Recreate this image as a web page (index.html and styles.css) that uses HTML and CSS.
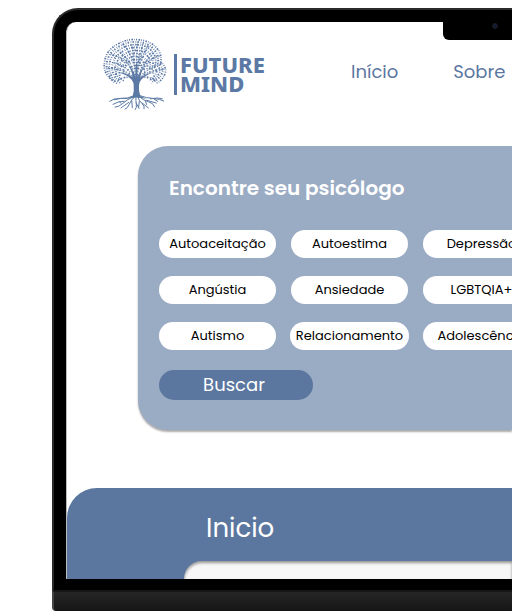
FILE: index.html
```html
<!DOCTYPE html>
<html lang="pt-BR">
<head>
<meta charset="utf-8">
<meta name="viewport" content="width=device-width, initial-scale=1">
<title>Future Mind</title>
<link rel="stylesheet" href="styles.css">
</head>
<body>
<div class="laptop">
  <div class="lid">
    <div class="notch"><span class="camera"></span></div>
    <div class="screen">
      <header class="header">
        <a class="logo" href="#">
          <svg class="tree" viewBox="20 22 198 218" aria-hidden="true">
            <defs>
              <path id="branches" d="M118 150Q112 130 76 118Q52 110 34 112M122 150Q118 118 90 92Q70 76 46 70M122 140Q120 100 104 70Q96 52 82 40M124 140Q124 90 126 32M125 140Q128 100 146 68Q152 54 160 44M126 145Q136 112 164 90Q178 78 192 76M127 148Q144 128 176 120Q194 116 208 116M114 142Q92 134 66 148M130 142Q154 134 184 148M104 124Q84 100 56 96M112 116Q106 92 72 62M136 118Q144 98 178 62M142 130Q160 112 198 98M121 112Q114 88 112 40M127 112Q132 84 142 40"/>
            </defs>
            <use class="twigs" href="#branches"/>
            <use class="buds" href="#branches"/>
            <g class="leaves">
              <path d="M50 148Q24 128 27 98Q30 60 65 41Q96 22 132 27Q174 31 192 63Q199 78 196 93Q214 108 210 127Q201 150 181 158"/>
              <path d="M57 154Q32 130 34 100Q37 66 70 48Q98 30 130 34Q168 38 184 67Q190 80 188 97Q205 110 202 124Q193 143 177 151"/>
              <path d="M65 158Q39 130 42 104Q44 73 75 55Q101 39 129 42Q161 44 177 72Q183 84 180 101Q197 112 193 124Q184 141 168 157"/>
              <path d="M74 156Q48 132 50 107Q53 80 80 63Q103 47 128 50Q155 53 169 77Q175 91 172 105Q187 115 183 126Q176 139 160 151"/>
              <path d="M85 150Q56 132 59 111Q61 88 86 71Q106 56 128 59Q149 61 161 83Q166 96 164 108Q176 118 172 129"/>
              <path d="M62 139Q60 114 76 95Q94 71 113 67Q136 66 153 89Q159 104 154 116"/>
              <path d="M74 135Q67 118 83 101Q97 80 116 76Q134 76 145 96Q150 108 145 119"/>
              <path d="M84 125Q82 113 94 102Q106 86 121 86Q136 93 139 110"/>
            </g>
            <path class="trunk" d="M112 196Q117 180 115 162Q114 147 98 136Q84 128 66 124Q88 125 101 132L111 139Q112 124 98 102Q115 118 120 139L122 98L126 98L126 139Q132 123 148 106Q136 124 134 142Q148 128 176 124Q150 133 139 145Q131 152 131 164Q130 184 136 196L154 204L123 200L93 204Z"/>
            <g class="roots">
              <path d="M117 194Q98 204 76 203T42 212M115 197Q94 207 82 218T58 229M119 197Q107 207 102 220T88 235M122 197Q121 210 123 220T119 237M127 197Q131 210 140 218T146 235M130 196Q146 210 160 213T178 229M132 194Q154 202 174 203T206 211M96 203Q72 200 56 207M88 211Q68 211 52 221M101 214L76 232M109 208L111 232M132 210L130 230M140 216L160 232M153 208L184 217M164 204Q188 199 202 204M122 216L132 234M77 218L72 212M150 209L154 222M175 204L188 212"/>
            </g>
          </svg>
          <span class="wordmark">FUTURE<br>MIND</span>
        </a>
        <nav class="nav">
          <a href="#inicio">Início</a>
          <a href="#sobre">Sobre</a>
        </nav>
      </header>

      <main>
        <section class="finder">
          <h1>Encontre seu psicólogo</h1>
          <div class="topics">
            <button type="button">Autoaceitação</button>
            <button type="button">Autoestima</button>
            <button type="button">Depressão</button>
            <button type="button">Angústia</button>
            <button type="button">Ansiedade</button>
            <button type="button">LGBTQIA+</button>
            <button type="button">Autismo</button>
            <button type="button">Relacionamento</button>
            <button type="button">Adolescência</button>
          </div>
          <button class="search" type="button">Buscar</button>
        </section>

        <section class="intro" id="inicio">
          <h2>Inicio</h2>
          <div class="panel"></div>
        </section>
      </main>
    </div>
  </div>
  <div class="base"></div>
</div>
</body>
</html>
```
FILE: styles.css
```css
* {
  box-sizing: border-box;
}

body {
  margin: 0;
  background: #fff;
  color: #000;
  font-family: Poppins, Inter, sans-serif;
  overflow: hidden;
}

h1,
h2 {
  margin: 0;
}

a {
  color: #5b779f;
  text-decoration: none;
}

button {
  border: 0;
  padding: 0;
  font: inherit;
  color: inherit;
}

.laptop {
  display: flex;
  flex-direction: column;
  min-height: 100vh;
  padding: 8px 0 0 52px;
}

.lid {
  position: relative;
  padding: 12px 0 11px 12px;
  border: 2px solid #2a2a2a;
  border-width: 2px 0 0 2px;
  border-radius: 26px 0 0 0;
  background: #000;
}

.notch {
  position: absolute;
  top: 0;
  right: 0;
  width: 69px;
  height: 30px;
  border-radius: 0 0 0 6px;
  background: #000;
}

.camera {
  position: absolute;
  top: 13px;
  left: 49px;
  width: 6px;
  height: 6px;
  border: 1px solid #1c1c1c;
  border-radius: 50%;
  background: #111b33;
}

.screen {
  overflow: hidden;
  border-left: 1px solid #bbb;
  border-radius: 10px 0 0 0;
  background: #fff;
}

.header {
  display: flex;
  align-items: center;
  height: 100px;
  padding-left: 35px;
}

.logo {
  display: flex;
  align-items: center;
  gap: 6px;
  width: 249px;
  padding-top: 4px;
}

.tree {
  flex: none;
  width: 66px;
  height: 73px;
  fill: none;
  stroke: #5b79a4;
}

.twigs {
  stroke-width: 1;
}

.buds {
  stroke-width: 6;
  stroke-dasharray: 2 5 4 7;
}

.leaves {
  stroke-width: 5;
  stroke-dasharray: 3 4 5 3 2 4;
}

.leaves path:nth-child(even) {
  stroke-width: 6;
  stroke-dasharray: 2 4 4 5;
}

.trunk {
  fill: #5b79a4;
  stroke: none;
}

.roots {
  stroke-width: 3;
}

.wordmark {
  padding: 1px 0 2px 3px;
  border-left: 3px solid #5b79a4;
  color: #5b79a4;
  font-family: "Noto Sans", sans-serif;
  font-size: 22px;
  font-weight: 800;
  line-height: 19px;
}

.nav {
  display: flex;
  gap: 55px;
  padding-bottom: 2px;
  font-size: 18px;
}

.finder {
  margin: 24px 0 0 71px;
  padding: 28px 0 30px 21px;
  border-radius: 30px 0 0 30px;
  background: #9aabc4;
  box-shadow: 0 2px 2px #0005;
}

.finder h1 {
  padding-left: 10px;
  color: #fff;
  font-size: 20px;
  font-weight: 600;
  line-height: 28px;
}

.topics {
  display: grid;
  grid-template-columns: 117px 121px 117px;
  gap: 18px 13px;
  justify-items: center;
  margin-top: 28px;
  font-size: 13px;
}

.topics button {
  min-width: 117px;
  height: 28px;
  padding: 0 6px 1px;
  border-radius: 14px;
  background: #fff;
}

.search {
  display: block;
  width: 154px;
  height: 30px;
  margin-top: 20px;
  padding: 0 4px 2px 0;
  border-radius: 15px;
  background: #5b779f;
  color: #fff;
  font-size: 18px;
}

.intro {
  margin-top: 58px;
  padding: 24px 0 0 117px;
  border-radius: 30px 0 0 0;
  background: #5b779f;
}

.intro h2 {
  padding-left: 22px;
  color: #fff;
  font-size: 26px;
  font-weight: 400;
  line-height: 32px;
}

.panel {
  height: 18px;
  margin-top: 17px;
  border-radius: 24px 0 0 0;
  background: #f7f7f7;
  box-shadow: inset 0 2px 3px #0006;
}

.base {
  flex: 1;
  min-height: 21px;
  border-top: 2px solid #161616;
  border-left: 2px solid #444;
  border-radius: 0 0 0 4px;
  background: linear-gradient(#262626, #151515);
}
```
